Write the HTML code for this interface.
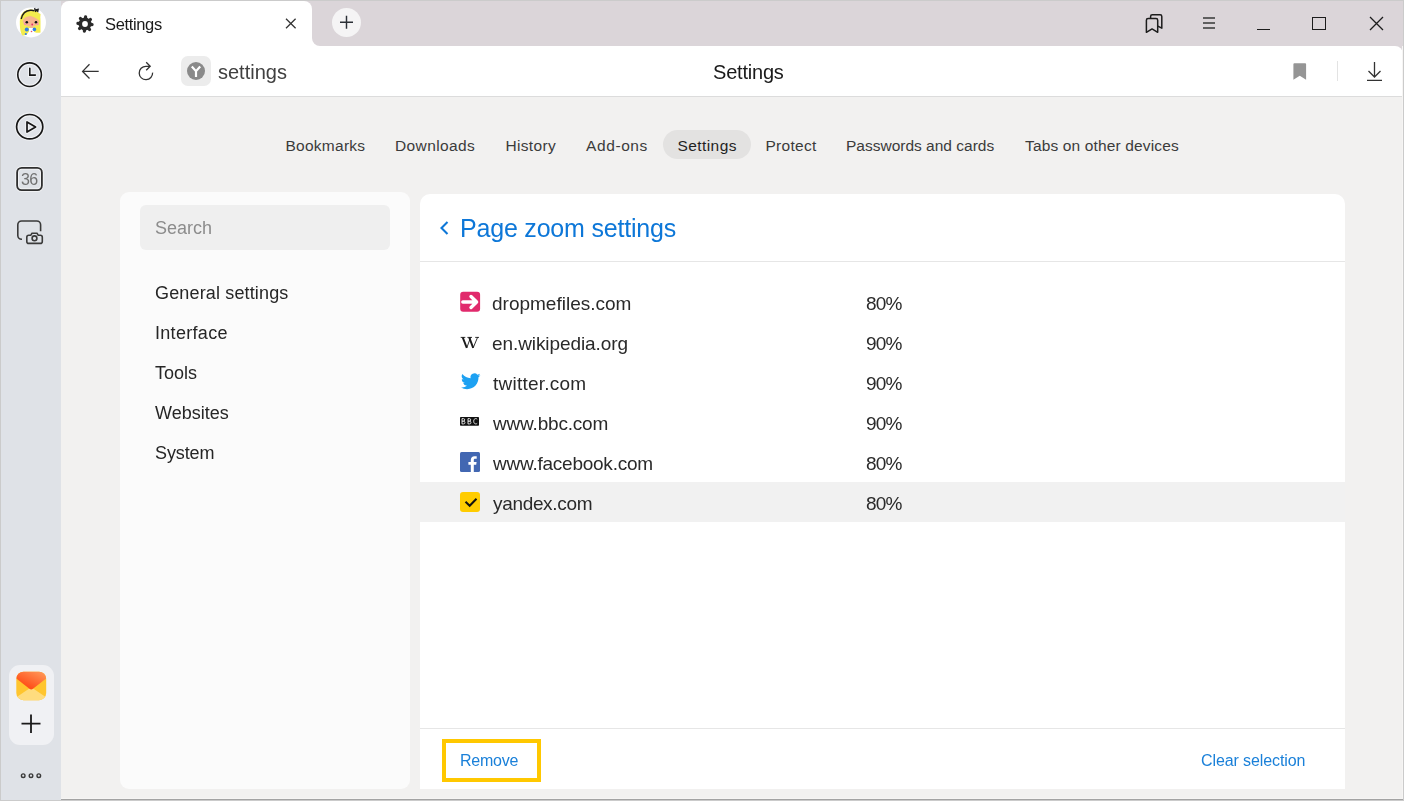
<!DOCTYPE html>
<html><head><meta charset="utf-8">
<style>
*{box-sizing:border-box;margin:0;padding:0}
html,body{width:1404px;height:801px;overflow:hidden;background:#f2f1f0;font-family:"Liberation Sans",sans-serif;color:#333;position:relative}
.abs{position:absolute}
.t{position:absolute;white-space:pre;line-height:1;font-family:"Liberation Sans",sans-serif}
svg{display:block;overflow:visible}
</style></head><body>
<div class="abs" style="left:0;top:0;width:61px;height:801px;background:#dfe2e7"></div>
<div class="abs" style="left:61px;top:0;width:1343px;height:60px;background:#dbd5d9"></div>
<div class="abs" style="left:312px;top:38px;width:10px;height:8px;background:#fff"></div>
<div class="abs" style="left:312px;top:0;width:1092px;height:46px;background:#dbd5d9;border-bottom-left-radius:8px"></div>
<div class="abs" style="left:61px;top:1px;width:251px;height:46px;background:#fff;border-radius:8px 8px 0 0"></div>
<div class="abs" style="left:61px;top:46px;width:1342px;height:51px;background:#fff;border-top-right-radius:8px;border-bottom:1px solid #dcdcdc"></div>
<svg class="abs" style="left:72px;top:11px;" width="26" height="26" viewBox="72 11 26 26"><circle cx="85" cy="24" r="6.5" fill="#2a2a2a"/><line x1="89.98" y1="24.44" x2="92.07" y2="24.62" stroke="#2a2a2a" stroke-width="3.2" stroke-linecap="round"/><line x1="88.21" y1="27.83" x2="89.56" y2="29.44" stroke="#2a2a2a" stroke-width="3.2" stroke-linecap="round"/><line x1="84.56" y1="28.98" x2="84.38" y2="31.07" stroke="#2a2a2a" stroke-width="3.2" stroke-linecap="round"/><line x1="81.17" y1="27.21" x2="79.56" y2="28.56" stroke="#2a2a2a" stroke-width="3.2" stroke-linecap="round"/><line x1="80.02" y1="23.56" x2="77.93" y2="23.38" stroke="#2a2a2a" stroke-width="3.2" stroke-linecap="round"/><line x1="81.79" y1="20.17" x2="80.44" y2="18.56" stroke="#2a2a2a" stroke-width="3.2" stroke-linecap="round"/><line x1="85.44" y1="19.02" x2="85.62" y2="16.93" stroke="#2a2a2a" stroke-width="3.2" stroke-linecap="round"/><line x1="88.83" y1="20.79" x2="90.44" y2="19.44" stroke="#2a2a2a" stroke-width="3.2" stroke-linecap="round"/><circle cx="85" cy="24" r="2.9" fill="#fff"/></svg>
<div class="t" style="left:105px;top:16.38px;font-size:16.5px;color:#1a1a1a;letter-spacing:-0.35px;will-change:transform;">Settings</div>
<svg class="abs" style="left:280px;top:12px;" width="20" height="22" viewBox="280 12 20 22"><path d="M286 18.7l9.6 9.6M295.6 18.7l-9.6 9.6" stroke="#333" stroke-width="1.25"/></svg>
<div class="abs" style="left:332px;top:8px;width:29px;height:29px;border-radius:50%;background:#f5f4f5"></div>
<svg class="abs" style="left:336px;top:12px;" width="22" height="22" viewBox="336 12 22 22"><path d="M346.5 15.8v13M340 22.3h13" stroke="#2b2f36" stroke-width="1.45"/></svg>
<svg class="abs" style="left:1140px;top:10px;" width="26" height="26" viewBox="1140 10 26 26"><path d="M1150.6 18V16.4a1.7 1.7 0 0 1 1.7-1.7h7.8a1.7 1.7 0 0 1 1.7 1.7V28.2l-4-2.1" fill="none" stroke="#1c1c1c" stroke-width="1.5" stroke-linejoin="round"/><path d="M1146.4 20.3a1.7 1.7 0 0 1 1.7-1.7h7.9a1.7 1.7 0 0 1 1.7 1.7V32.3l-5.65-3.4-5.65 3.4z" fill="none" stroke="#1c1c1c" stroke-width="1.5" stroke-linejoin="round"/></svg>
<svg class="abs" style="left:1200px;top:12px;" width="18" height="20" viewBox="1200 12 18 20"><path d="M1203 18h12M1203 23h12M1203 28h12" stroke="#5f5f5f" stroke-width="1.8"/></svg>
<div class="abs" style="left:1257px;top:29px;width:13px;height:1.3px;background:#1c1c1c"></div>
<div class="abs" style="left:1312px;top:17px;width:14px;height:13px;border:1.3px solid #1c1c1c"></div>
<svg class="abs" style="left:1366px;top:13px;" width="21" height="21" viewBox="1366 13 21 21"><path d="M1370 17l13 13M1383 17l-13 13" stroke="#1c1c1c" stroke-width="1.3"/></svg>
<svg class="abs" style="left:76px;top:58px;" width="28" height="26" viewBox="76 58 28 26"><path d="M98.7 71.4H82.9M89.5 64.3L82.6 71.4L89.5 78.5" fill="none" stroke="#333" stroke-width="1.3"/></svg>
<svg class="abs" style="left:132px;top:56px;" width="28" height="30" viewBox="132 56 28 30"><path d="M152.6 72.6A6.7 6.7 0 1 1 145.9 66.3H150M146.2 62.3L150.2 66.3L146.2 70.3" fill="none" stroke="#333" stroke-width="1.3"/></svg>
<div class="abs" style="left:181px;top:56px;width:30px;height:30px;border-radius:7px;background:#ececec"></div>
<svg class="abs" style="left:184px;top:59px;" width="24" height="24" viewBox="184 59 24 24"><circle cx="196" cy="71" r="9" fill="#8a8a8a"/><path d="M191.8 66.6L196 71.2l4.2-4.6M196 71.2V77" fill="none" stroke="#fff" stroke-width="2.2"/></svg>
<div class="t" style="left:218px;top:62.00px;font-size:20px;color:#404040;letter-spacing:0px;will-change:transform;">settings</div>
<div class="t" style="left:713px;top:62.00px;font-size:20px;color:#1a1a1a;letter-spacing:-0.2px;will-change:transform;">Settings</div>
<svg class="abs" style="left:1290px;top:60px;" width="20" height="24" viewBox="1290 60 20 24"><path d="M1294.4 63.2h10.7a1 1 0 0 1 1 1v15.5l-6.35-4-6.35 4V64.2a1 1 0 0 1 1-1z" fill="#959595"/></svg>
<div class="abs" style="left:1337px;top:61px;width:1px;height:20px;background:#e3e3e3"></div>
<svg class="abs" style="left:1362px;top:58px;" width="26" height="28" viewBox="1362 58 26 28"><path d="M1374.5 62v15M1368.5 71l6 6 6-6M1367 80.4h15" fill="none" stroke="#333" stroke-width="1.3"/></svg>
<svg class="abs" style="left:14px;top:5px;" width="34" height="34" viewBox="14 5 34 34"><circle cx="31" cy="22.5" r="15" fill="#fff"/>
<path d="M19.8 22C19.8 13 24.5 9.4 31 9.4C37 9.4 40.5 13.5 40.5 21V32.5C38.5 33 36.5 33 34.5 32L28.5 32C27.5 34.5 25.5 35.5 22.5 35.5C20.5 33 19.8 28 19.8 22z" fill="#f3ec4e"/>
<ellipse cx="31" cy="21.3" rx="8.2" ry="5.4" fill="#f7b58f"/>
<path d="M27.5 15.6Q34.5 16.2 39.9 21.6L40.6 14Q36 10.5 30 11.5z" fill="#f3ec4e"/>
<path d="M21.2 19C22.5 13 26.5 10.6 30.5 10.3C32 10.2 33.5 10.4 34.5 10.8" fill="none" stroke="#1e1e1e" stroke-width="1.4"/>
<path d="M34 9.6L39 8.4 38.2 12.4z" fill="#1e1e1e"/><path d="M34.6 8l1.2 4" stroke="#1e1e1e" stroke-width="1.2"/>
<circle cx="26.8" cy="22.2" r="1.3" fill="#111"/><circle cx="36" cy="22.2" r="1.3" fill="#111"/>
<circle cx="25" cy="24.1" r="1.1" fill="#f28fb0"/><circle cx="37.7" cy="24.1" r="1.1" fill="#f28fb0"/>
<circle cx="32.2" cy="24.5" r="0.9" fill="#e0306e"/>
<rect x="30" y="26" width="3" height="2.5" fill="#f7b58f"/>
<path d="M29 28h5v6.5h-5z" fill="#fff"/><circle cx="31.5" cy="31.5" r="0.8" fill="#e8506a"/>
<circle cx="26.8" cy="29.6" r="2" fill="#2d7fe6"/><circle cx="34.4" cy="29.4" r="1.8" fill="#2d7fe6"/><circle cx="25.8" cy="34" r="1.1" fill="#2d7fe6"/></svg>
<svg class="abs" style="left:14px;top:59px;" width="32" height="32" viewBox="14 59 32 32"><g fill="none" stroke-linecap="round"><g stroke="#fff" stroke-opacity="0.55" stroke-width="3.8"><circle cx="29.6" cy="74.7" r="11.8"/><path d="M29.8 68.2v6.9h5.6"/></g><g stroke="#161616" stroke-width="1.6"><circle cx="29.6" cy="74.7" r="11.8"/><path d="M29.8 68.2v6.9h5.6"/></g></g></svg>
<svg class="abs" style="left:13px;top:110px;" width="34" height="34" viewBox="13 110 34 34"><g fill="none" stroke-linejoin="round"><g stroke="#fff" stroke-opacity="0.55" stroke-width="3.8"><ellipse cx="29.7" cy="126.7" rx="13.1" ry="12.2"/><path d="M27 121.9v10.2l8.6-5.1z"/></g><g stroke="#161616" stroke-width="1.7"><ellipse cx="29.7" cy="126.7" rx="13.1" ry="12.2"/><path d="M27 121.9v10.2l8.6-5.1z"/></g></g></svg>
<svg class="abs" style="left:14px;top:165px;" width="32" height="28" viewBox="14 165 32 28"><rect x="17.1" y="167.8" width="24.8" height="22.4" rx="4.6" fill="none" stroke="#fff" stroke-opacity="0.55" stroke-width="3.8"/><rect x="17.1" y="167.8" width="24.8" height="22.4" rx="4.6" fill="none" stroke="#2f2f2f" stroke-width="1.8"/></svg>
<div class="t" style="left:21px;top:172.40px;font-size:16px;color:#707070;letter-spacing:-0.6px;will-change:transform;">36</div>
<svg class="abs" style="left:14px;top:216px;" width="32" height="30" viewBox="14 216 32 30"><path d="M22 239.3H21.6a3.8 3.8 0 0 1-3.8-3.8V224.8a3.8 3.8 0 0 1 3.8-3.8h15.2a3.8 3.8 0 0 1 3.8 3.8v6.4" fill="none" stroke="#3a3a3a" stroke-width="1.6"/><path d="M28.8 235.2h2.1l1.1-2h5l1.1 2h2.2a2 2 0 0 1 2 2v4.2a2 2 0 0 1-2 2H28.8a2 2 0 0 1-2-2v-4.2a2 2 0 0 1 2-2z" fill="#dfe2e7" stroke="#dfe2e7" stroke-width="4.5" stroke-linejoin="round"/><path d="M28.8 235.2h2.1l1.1-2h5l1.1 2h2.2a2 2 0 0 1 2 2v4.2a2 2 0 0 1-2 2H28.8a2 2 0 0 1-2-2v-4.2a2 2 0 0 1 2-2z" fill="none" stroke="#3a3a3a" stroke-width="1.6" stroke-linejoin="round"/><circle cx="34.5" cy="238.3" r="2.4" fill="none" stroke="#3a3a3a" stroke-width="1.6"/></svg>
<div class="abs" style="left:9px;top:665px;width:45px;height:80px;border-radius:11px;background:#f0f1f4"></div>
<svg class="abs" style="left:14px;top:668px;" width="34" height="36" viewBox="14 668 34 36"><defs><linearGradient id="mr" x1="1" y1="0" x2="0.2" y2="1"><stop offset="0" stop-color="#ffa060"/><stop offset="1" stop-color="#ff3e0a"/></linearGradient>
<clipPath id="mc"><rect x="16.3" y="671.7" width="29.9" height="28.5" rx="7.2"/></clipPath></defs>
<g clip-path="url(#mc)"><rect x="16" y="671" width="31" height="30" fill="#ffc52e"/>
<path d="M16 701V697.5L31.2 687.2 46.5 697.5V701z" fill="#ffdc7e"/>
<path d="M16 671H46.5V678.2L33 688.8Q31.2 690.2 29.4 688.8L16 678.2z" fill="url(#mr)"/></g></svg>
<svg class="abs" style="left:18px;top:711px;" width="26" height="26" viewBox="18 711 26 26"><path d="M31 714.5v18.5M21.5 723.7h19" stroke="#1a1a1a" stroke-width="1.8"/></svg>
<svg class="abs" style="left:18px;top:770px;" width="26" height="12" viewBox="18 770 26 12"><circle cx="23.2" cy="775.7" r="1.8" fill="none" stroke="#3a3a3a" stroke-width="1.4"/><circle cx="31" cy="775.7" r="1.8" fill="none" stroke="#3a3a3a" stroke-width="1.4"/><circle cx="38.8" cy="775.7" r="1.8" fill="none" stroke="#3a3a3a" stroke-width="1.4"/></svg>
<div class="abs" style="left:663px;top:130px;width:88px;height:29px;border-radius:14.5px;background:#e3e2e1"></div>
<div class="t" style="left:285.5px;top:138.42px;font-size:15.5px;color:#3b3b3b;letter-spacing:0.26px;">Bookmarks</div>
<div class="t" style="left:395px;top:138.42px;font-size:15.5px;color:#3b3b3b;letter-spacing:0.39px;">Downloads</div>
<div class="t" style="left:505.5px;top:138.42px;font-size:15.5px;color:#3b3b3b;letter-spacing:0.32px;">History</div>
<div class="t" style="left:586px;top:138.42px;font-size:15.5px;color:#3b3b3b;letter-spacing:0.6px;">Add-ons</div>
<div class="t" style="left:677.5px;top:138.42px;font-size:15.5px;color:#1f1f1f;letter-spacing:0.42px;">Settings</div>
<div class="t" style="left:765.5px;top:138.42px;font-size:15.5px;color:#3b3b3b;letter-spacing:0.28px;">Protect</div>
<div class="t" style="left:846px;top:138.42px;font-size:15.5px;color:#3b3b3b;letter-spacing:0px;">Passwords and cards</div>
<div class="t" style="left:1025px;top:138.42px;font-size:15.5px;color:#3b3b3b;letter-spacing:0.15px;">Tabs on other devices</div>
<div class="abs" style="left:120px;top:192px;width:290px;height:597px;background:#fbfbfb;border-radius:9px"></div>
<div class="abs" style="left:140px;top:205px;width:250px;height:45px;background:#efefef;border-radius:6px"></div>
<div class="t" style="left:154.5px;top:218.70px;font-size:18px;color:#8c8c8c;letter-spacing:0px;will-change:transform;">Search</div>
<div class="t" style="left:154.5px;top:283.70px;font-size:18px;color:#262626;letter-spacing:0.15px;will-change:transform;">General settings</div>
<div class="t" style="left:154.5px;top:323.70px;font-size:18px;color:#262626;letter-spacing:0.3px;will-change:transform;">Interface</div>
<div class="t" style="left:154.5px;top:363.70px;font-size:18px;color:#262626;letter-spacing:0px;will-change:transform;">Tools</div>
<div class="t" style="left:154.5px;top:403.70px;font-size:18px;color:#262626;letter-spacing:0px;will-change:transform;">Websites</div>
<div class="t" style="left:154.5px;top:443.70px;font-size:18px;color:#262626;letter-spacing:-0.1px;will-change:transform;">System</div>
<div class="abs" style="left:420px;top:194px;width:925px;height:595px;background:#fff;border-radius:10px 10px 0 0;overflow:hidden"><div class="abs" style="left:0;top:67px;width:925px;height:1px;background:#e6e6e6"></div><div class="abs" style="left:0;top:288px;width:925px;height:40px;background:#f1f1f1"></div><div class="abs" style="left:0;top:534px;width:925px;height:1px;background:#e6e6e6"></div></div>
<svg class="abs" style="left:434px;top:216px;" width="20" height="24" viewBox="434 216 20 24"><path d="M447.5 222L441.5 228l6 6" fill="none" stroke="#0d77d8" stroke-width="2.1"/></svg>
<div class="t" style="left:460px;top:216.25px;font-size:25px;color:#0d77d8;letter-spacing:-0.2px;will-change:transform;">Page zoom settings</div>
<div class="t" style="left:492px;top:293.85px;font-size:19px;color:#2a2a2a;letter-spacing:0px;will-change:transform;">dropmefiles.com</div>
<div class="t" style="left:866px;top:293.85px;font-size:19px;color:#2a2a2a;letter-spacing:-0.8px;will-change:transform;">80%</div>
<div class="t" style="left:492px;top:333.85px;font-size:19px;color:#2a2a2a;letter-spacing:-0.09px;will-change:transform;">en.wikipedia.org</div>
<div class="t" style="left:866px;top:333.85px;font-size:19px;color:#2a2a2a;letter-spacing:-0.8px;will-change:transform;">90%</div>
<div class="t" style="left:492.5px;top:373.85px;font-size:19px;color:#2a2a2a;letter-spacing:0.24px;will-change:transform;">twitter.com</div>
<div class="t" style="left:866px;top:373.85px;font-size:19px;color:#2a2a2a;letter-spacing:-0.8px;will-change:transform;">90%</div>
<div class="t" style="left:492.5px;top:413.85px;font-size:19px;color:#2a2a2a;letter-spacing:-0.19px;will-change:transform;">www.bbc.com</div>
<div class="t" style="left:866px;top:413.85px;font-size:19px;color:#2a2a2a;letter-spacing:-0.8px;will-change:transform;">90%</div>
<div class="t" style="left:492.5px;top:453.85px;font-size:19px;color:#2a2a2a;letter-spacing:-0.24px;will-change:transform;">www.facebook.com</div>
<div class="t" style="left:866px;top:453.85px;font-size:19px;color:#2a2a2a;letter-spacing:-0.8px;will-change:transform;">80%</div>
<div class="t" style="left:492.5px;top:493.85px;font-size:19px;color:#2a2a2a;letter-spacing:-0.33px;will-change:transform;">yandex.com</div>
<div class="t" style="left:866px;top:493.85px;font-size:19px;color:#2a2a2a;letter-spacing:-0.8px;will-change:transform;">80%</div>
<svg class="abs" style="left:456px;top:288px;" width="28" height="28" viewBox="456 288 28 28"><rect x="460.2" y="291.8" width="19.9" height="20" rx="3" fill="#e12a6c"/><path d="M462.8 302H476.5M471 296.5L476.6 302L471 307.5" fill="none" stroke="#fff" stroke-width="3.4" stroke-linecap="round" stroke-linejoin="round"/></svg>
<svg class="abs" style="left:456px;top:328px;" width="28" height="28" viewBox="456 328 28 28"><g stroke="#1a1a1a" fill="none"><path d="M462.7 337.3L466.8 347.8" stroke-width="1.9"/><path d="M466.8 347.8L470.6 337.3" stroke-width="0.9"/><path d="M469.2 337.3L473.2 347.8" stroke-width="1.9"/><path d="M473.2 347.8L477.6 337.3" stroke-width="0.9"/><path d="M460.7 337.4h4.6M467.4 337.4h4.6M475.2 337.4h3.8" stroke-width="0.9"/></g></svg>
<svg class="abs" style="left:460.5px;top:373px" width="19.5" height="17" viewBox="0 0 24 20"><path fill="#1da1f2" d="M24 2.4a9.8 9.8 0 0 1-2.8.8A4.9 4.9 0 0 0 23.3.4a9.8 9.8 0 0 1-3.1 1.2A4.9 4.9 0 0 0 11.8 6 14 14 0 0 1 1.7.9a4.9 4.9 0 0 0 1.5 6.6 4.9 4.9 0 0 1-2.2-.6 4.9 4.9 0 0 0 3.9 4.9 4.9 4.9 0 0 1-2.2.1 4.9 4.9 0 0 0 4.6 3.4A9.9 9.9 0 0 1 0 17.3 14 14 0 0 0 7.5 19.5c9.1 0 14-7.5 14-14v-.6A10 10 0 0 0 24 2.4z"/></svg>
<svg class="abs" style="left:456px;top:412px;" width="28" height="18" viewBox="456 412 28 18"><rect x="460" y="416.9" width="19" height="8.8" rx="0.8" fill="#111"/><g fill="none" stroke="#ddd" stroke-width="1"><path d="M462 418.6v5.3h1.6a1.3 1.3 0 0 0 0-2.7h-1.6 1.4a1.2 1.2 0 0 0 0-2.6z"/><path d="M468 418.6v5.3h1.6a1.3 1.3 0 0 0 0-2.7h-1.6 1.4a1.2 1.2 0 0 0 0-2.6z"/><path d="M477.2 419.2a1.9 1.9 0 0 0-1.5-0.6c-1.2 0-2 1-2 2.65s0.8 2.65 2 2.65a1.9 1.9 0 0 0 1.5-0.6"/></g></svg>
<svg class="abs" style="left:456px;top:448px;" width="28" height="28" viewBox="456 448 28 28"><rect x="460" y="452" width="20" height="20" rx="1.5" fill="#4267b2"/><path d="M473.8 472v-7.2h2.4l0.4-2.8h-2.8v-1.8c0-.8.2-1.4 1.4-1.4h1.5v-2.5c-.3 0-1.1-.1-2.2-.1-2.2 0-3.7 1.3-3.7 3.8V462h-2.4v2.8h2.4V472z" fill="#fff"/></svg>
<svg class="abs" style="left:456px;top:488px;" width="28" height="28" viewBox="456 488 28 28"><rect x="460" y="492" width="20" height="20" rx="3" fill="#ffcc00"/><path d="M465.5 501.7L469.7 505.8L476.5 498.8" fill="none" stroke="#111" stroke-width="2"/></svg>
<div class="abs" style="left:442px;top:739px;width:99px;height:43px;border:4px solid #ffc800"></div>
<div class="t" style="left:459.5px;top:753.40px;font-size:16px;color:#1a80d9;letter-spacing:-0.25px;will-change:transform;">Remove</div>
<div class="t" style="left:1200.5px;top:753.40px;font-size:16px;color:#1a80d9;letter-spacing:-0.1px;will-change:transform;">Clear selection</div>
<div class="abs" style="left:61px;top:798px;width:1342px;height:1px;background:#f6f5f4"></div>
<div class="abs" style="left:61px;top:799px;width:1342px;height:1px;background:#a3a3a3"></div>
<div class="abs" style="left:1402px;top:46px;width:1px;height:753px;background:#f6f5f4"></div>
<div class="abs" style="left:0;top:0;width:1404px;height:801px;border:1px solid #cbcbcb;z-index:50"></div>
</body></html>
